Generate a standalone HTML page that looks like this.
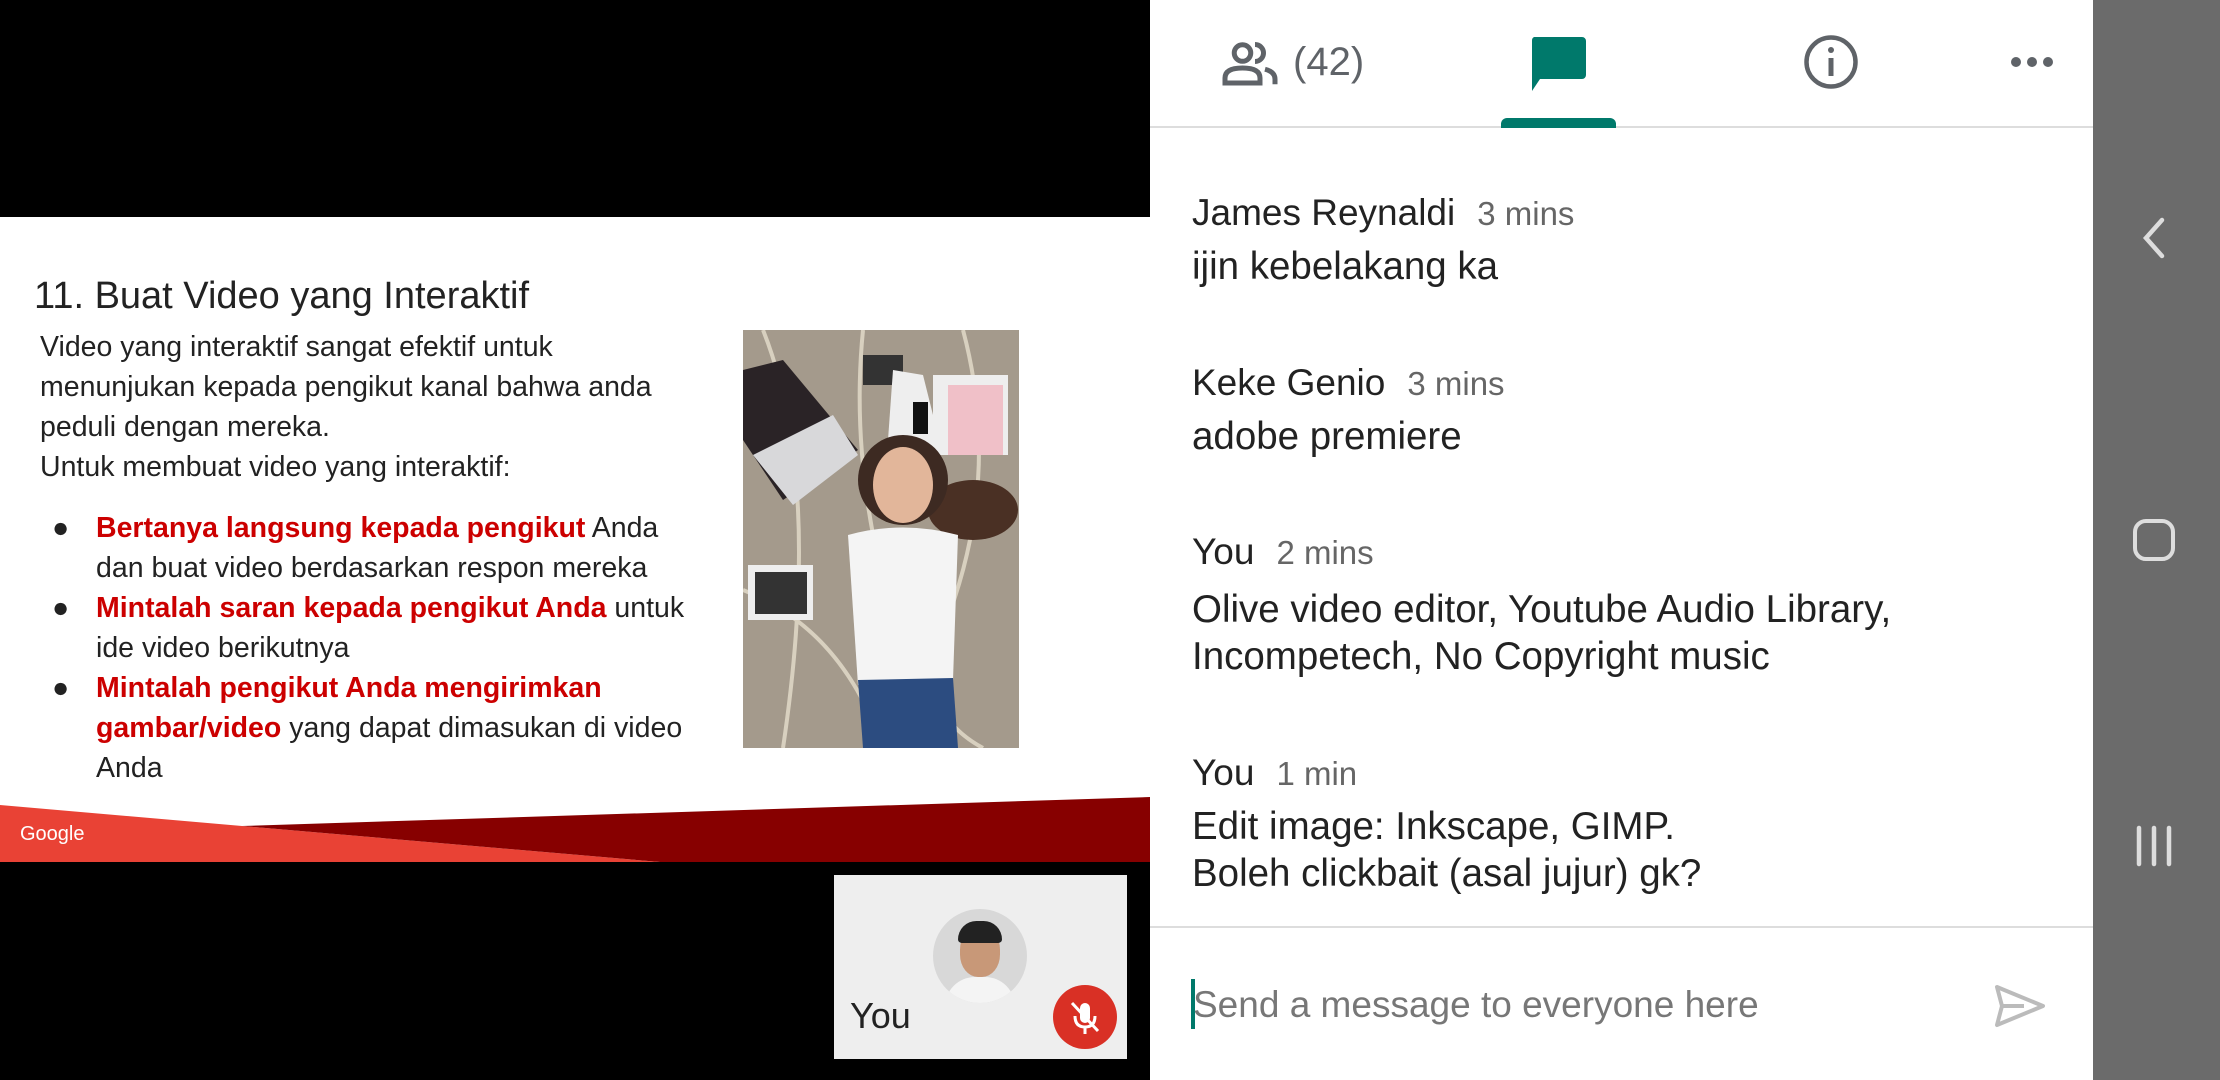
<!DOCTYPE html>
<html><head><meta charset="utf-8"><style>
*{margin:0;padding:0;box-sizing:border-box}
body{width:2220px;height:1080px;overflow:hidden;background:#000;position:relative;font-family:"Liberation Sans",sans-serif}
.a{position:absolute;white-space:nowrap}
.s{font-size:28.5px;color:#222;line-height:40px}
.r{color:#c00;font-weight:bold}
.n{font-size:37px;color:#222}
.t{font-size:33px;color:#666;margin-left:22px}
.m{font-size:38.5px;color:#222;line-height:47px}
</style></head><body>
<div class="a" style="left:0;top:217px;width:1150px;height:645px;background:#fff"></div>
<div class="a" style="left:34px;top:275px;font-size:38px;color:#222">11. Buat Video yang Interaktif</div>
<div class="a s" style="left:40px;top:327px">Video yang interaktif sangat efektif untuk<br>menunjukan kepada pengikut kanal bahwa anda<br>peduli dengan mereka.<br>Untuk membuat video yang interaktif:</div>
<div class="a s" style="left:52px;top:508px">●<br><br>●<br><br>●</div>
<div class="a s" style="left:96px;top:508px"><span class="r">Bertanya langsung kepada pengikut</span> Anda<br>dan buat video berdasarkan respon mereka<br><span class="r">Mintalah saran kepada pengikut Anda</span> untuk<br>ide video berikutnya<br><span class="r">Mintalah pengikut Anda mengirimkan</span><br><span class="r">gambar/video</span> yang dapat dimasukan di video<br>Anda</div>
<svg class="a" style="left:743px;top:330px" width="276" height="418" viewBox="0 0 276 418">
<rect width="276" height="418" fill="#a49a8c"/>
<path d="M20 0 Q80 150 40 418 M120 0 Q100 200 200 418 M220 0 Q260 150 200 300 Q170 380 240 418 M0 260 Q100 300 140 418" stroke="#d8d0bf" stroke-width="4" fill="none"/>
<path d="M0 40 L40 30 L115 120 L40 170 L0 110Z" fill="#2a2326"/>
<path d="M10 125 L90 85 L115 125 L50 175Z" fill="#d8d8da"/>
<rect x="120" y="25" width="40" height="30" fill="#333"/>
<path d="M150 40 L180 45 L200 125 L145 110Z" fill="#eee"/>
<rect x="190" y="45" width="75" height="80" fill="#eee"/>
<rect x="205" y="55" width="55" height="70" fill="#f0c0c8"/>
<rect x="170" y="72" width="15" height="32" fill="#111"/>
<rect x="5" y="235" width="65" height="55" fill="#eee"/>
<rect x="12" y="242" width="52" height="42" fill="#333"/>
<ellipse cx="230" cy="180" rx="45" ry="30" fill="#4a3024"/>
<ellipse cx="160" cy="150" rx="45" ry="45" fill="#3d2a22"/>
<ellipse cx="160" cy="155" rx="30" ry="38" fill="#e2b69a"/>
<path d="M105 205 Q160 190 215 205 L210 350 L115 355Z" fill="#f4f4f4"/>
<path d="M115 350 L210 348 L215 418 L120 418Z" fill="#2c4c80"/>
</svg>
<svg class="a" style="left:0;top:790px" width="1150" height="72">
<polygon points="0,15 242,36 660,72 0,72" fill="#e94235"/>
<polygon points="242,36 1150,7 1150,72 660,72" fill="#870000"/>
<text x="20" y="50" font-family="Liberation Sans" font-size="20" fill="#fff">Google</text>
</svg>
<div class="a" style="left:834px;top:875px;width:293px;height:184px;background:#eee"></div>
<div class="a" style="left:933px;top:909px;width:94px;height:94px;border-radius:50%;background:#d8d8d8;overflow:hidden">
<div style="position:absolute;left:27px;top:18px;width:40px;height:50px;border-radius:45%;background:#c89878"></div>
<div style="position:absolute;left:25px;top:12px;width:44px;height:22px;border-radius:20px 20px 4px 4px;background:#222"></div>
<div style="position:absolute;left:12px;top:68px;width:70px;height:40px;border-radius:30px 30px 0 0;background:#f4f4f4"></div></div>
<div class="a" style="left:850px;top:995px;font-size:36px;color:#222">You</div>
<svg class="a" style="left:1053px;top:985px" width="64" height="64" viewBox="0 0 64 64"><circle cx="32" cy="32" r="32" fill="#d93025"/><rect x="27" y="18" width="10" height="20" rx="5" fill="#fff"/><path d="M22 31 q0 11 10 11 q10 0 10-11 M32 42 v7" stroke="#fff" stroke-width="3" fill="none"/><path d="M19 18 L45 46" stroke="#fff" stroke-width="3"/></svg>

<div class="a" style="left:1150px;top:0;width:943px;height:1080px;background:#fff"></div>
<div class="a" style="left:1150px;top:126px;width:943px;height:2px;background:#ddd"></div>
<svg class="a" style="left:1219px;top:38px" width="62" height="50" viewBox="0 0 24 20"><circle cx="9" cy="6" r="3.3" fill="none" stroke="#5f6368" stroke-width="2"/><path d="M2 18 v-2 q0-4 7-4 q7 0 7 4 v2z" fill="none" stroke="#5f6368" stroke-width="2"/><path d="M14 2.6 a3.3 3.3 0 0 1 0 6.8 M18 12.5 q4 1 4 4 v2" fill="none" stroke="#5f6368" stroke-width="2"/></svg>
<div class="a" style="left:1293px;top:40px;font-size:40px;color:#5f6368">(42)</div>
<svg class="a" style="left:1530px;top:37px" width="56" height="54" viewBox="0 0 56 54"><path d="M4 0 H52 a4 4 0 0 1 4 4 V38 a4 4 0 0 1-4 4 H10 L2 54 V4 a4 4 0 0 1 2-4z" fill="#00796b"/></svg>
<div class="a" style="left:1501px;top:118px;width:115px;height:10px;border-radius:6px 6px 0 0;background:#00796b"></div>
<svg class="a" style="left:1803px;top:34px" width="56" height="56" viewBox="0 0 56 56"><circle cx="28" cy="28" r="24.5" fill="none" stroke="#5f6368" stroke-width="4.5"/><rect x="25.5" y="24" width="5" height="18" fill="#5f6368"/><circle cx="28" cy="16" r="3" fill="#5f6368"/></svg>
<svg class="a" style="left:2010px;top:56px" width="44" height="12"><circle cx="6" cy="6" r="5" fill="#5f6368"/><circle cx="22" cy="6" r="5" fill="#5f6368"/><circle cx="38" cy="6" r="5" fill="#5f6368"/></svg>

<div class="a" style="left:1192px;top:192px"><span class="n">James Reynaldi</span><span class="t">3 mins</span></div>
<div class="a m" style="left:1192px;top:243px">ijin kebelakang ka</div>
<div class="a" style="left:1192px;top:362px"><span class="n">Keke Genio</span><span class="t">3 mins</span></div>
<div class="a m" style="left:1192px;top:413px">adobe premiere</div>
<div class="a" style="left:1192px;top:531px"><span class="n">You</span><span class="t">2 mins</span></div>
<div class="a m" style="left:1192px;top:586px">Olive video editor, Youtube Audio Library,<br>Incompetech, No Copyright music</div>
<div class="a" style="left:1192px;top:752px"><span class="n">You</span><span class="t">1 min</span></div>
<div class="a m" style="left:1192px;top:803px">Edit image: Inkscape, GIMP.<br>Boleh clickbait (asal jujur) gk?</div>
<div class="a" style="left:1150px;top:926px;width:943px;height:2px;background:#ddd"></div>
<div class="a" style="left:1191px;top:979px;width:4px;height:50px;background:#00796b"></div>
<div class="a" style="left:1193px;top:984px;font-size:37px;color:#777">Send a message to everyone here</div>
<svg class="a" style="left:1994px;top:984px" width="52" height="44" viewBox="0 0 52 44"><path d="M3 3 L49 22 L3 41 L8 22Z M8 22 H30" fill="none" stroke="#bbb" stroke-width="4" stroke-linejoin="round"/></svg>

<div class="a" style="left:2093px;top:0;width:127px;height:1080px;background:#6b6b6b"></div>
<svg class="a" style="left:2140px;top:216px" width="28" height="44"><path d="M22 4 L6 22 L22 40" stroke="#ddd" stroke-width="4.5" fill="none" stroke-linecap="round"/></svg>
<div class="a" style="left:2133px;top:519px;width:42px;height:42px;border:4.5px solid #ddd;border-radius:13px"></div>
<svg class="a" style="left:2134px;top:824px" width="40" height="44"><path d="M5 4 V40 M20 4 V40 M35 4 V40" stroke="#ddd" stroke-width="4.5" stroke-linecap="round"/></svg>
</body></html>
